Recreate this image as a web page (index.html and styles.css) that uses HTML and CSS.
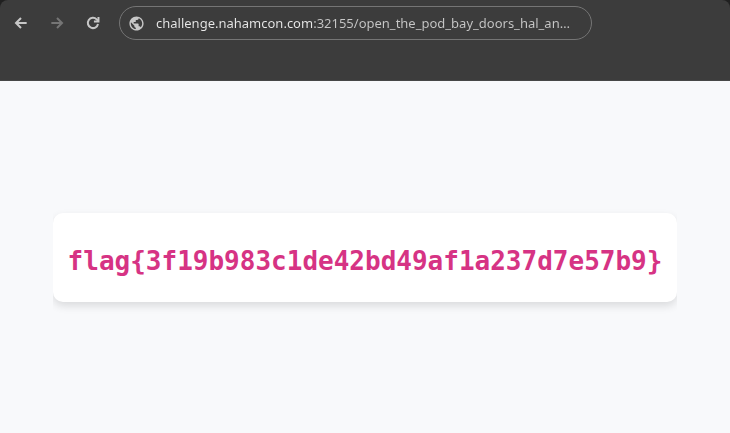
FILE: index.html
```html
<!DOCTYPE html>
<html lang="en">
<head>
<meta charset="utf-8">
<title>Flag</title>
<link rel="stylesheet" href="styles.css">
</head>
<body>
<header class="chrome">
  <nav class="toolbar" aria-label="Browser toolbar">
    <button class="tool" type="button" aria-label="Back">
      <svg viewBox="0 0 24 24"><path d="M20.500 12H5M12 4.500 4.500 12l7.500 7.500"/></svg>
    </button>
    <button class="tool" type="button" aria-label="Forward" disabled>
      <svg viewBox="0 0 24 24"><path d="M3.500 12H19M12 4.500l7.500 7.500-7.500 7.500"/></svg>
    </button>
    <button class="tool" type="button" aria-label="Reload">
      <svg viewBox="0 0 24 24"><path d="M19.500 13.500A7.700 7.700 0 1 1 17.500 6.600L20 9"/><path d="M20.200 3v6.800h-6.800"/></svg>
    </button>
    <label class="address">
      <svg class="globe" viewBox="0 0 24 24" aria-hidden="true"><path d="M12 2C6.480 2 2 6.480 2 12s4.480 10 10 10 10-4.480 10-10S17.520 2 12 2zm-1 17.930c-3.950-.49-7-3.850-7-7.930 0-.62.08-1.210.21-1.790L9 15v1c0 1.100.9 2 2 2v1.930zm6.900-2.540c-.26-.81-1-1.390-1.900-1.390h-1v-3c0-.55-.45-1-1-1H8v-2h2c.55 0 1-.45 1-1V7h2c1.100 0 2-.9 2-2v-.41c2.930 1.190 5 4.060 5 7.410 0 2.080-.8 3.970-2.100 5.390z"/></svg>
      <input class="url" type="text" aria-label="Address" spellcheck="false" value="challenge.nahamcon.com:32155/open_the_pod_bay_doors_hal_an…">
    </label>
  </nav>
</header>
<main class="page">
  <div class="clip">
    <div class="card"><code class="flag">flag{3f19b983c1de42bd49af1a237d7e57b9}</code></div>
  </div>
</main>
</body>
</html>
```
FILE: styles.css
```css
* {
  box-sizing: border-box;
}

body {
  display: flex;
  flex-direction: column;
  min-height: 100vh;
  margin: 0;
  background: #202020;
  font-family: "Noto Sans", "Open Sans", sans-serif;
}

.chrome {
  height: 81px;
  padding: 6px 7px;
  background: #3c3c3c;
  border-bottom: 1px solid #474747;
  border-radius: 8px 8px 0 0;
}

.toolbar {
  display: flex;
  align-items: center;
  gap: 8px;
}

.tool {
  display: flex;
  align-items: center;
  justify-content: center;
  width: 28px;
  height: 28px;
  padding: 0;
  border: 0;
  border-radius: 50%;
  background: transparent;
  color: #c7c7c7;
}

.tool:disabled {
  color: #757575;
}

.tool svg {
  width: 16px;
  height: 16px;
  fill: none;
  stroke: currentColor;
  stroke-width: 3;
}

.address {
  display: flex;
  align-items: center;
  gap: 11px;
  flex: 0 1 473px;
  height: 34px;
  margin-left: 4px;
  padding: 0 16px 0 8px;
  border: 1px solid #757575;
  border-radius: 17px;
}

.globe {
  flex: none;
  width: 17px;
  height: 17px;
  fill: #c7c7c7;
}

.url {
  flex: 1;
  min-width: 0;
  padding: 0;
  border: 0;
  outline: 0;
  background: linear-gradient(90deg, #e9e9e9 156px, #c7c7c7 156px);
  background-clip: text;
  color: transparent;
  font: 13px/20px "Noto Sans", "Open Sans", sans-serif;
}

.page {
  display: flex;
  flex: 1;
  align-items: center;
  justify-content: center;
  background: #f8f9fb;
}

.clip {
  padding: 12px 0;
  overflow: hidden;
}

.card {
  padding: 32px 15px 24px;
  border-radius: 10px;
  background: #fff;
  box-shadow: 0 4px 8px rgb(0 0 0 / 12%);
}

.flag {
  display: block;
  color: #d63384;
  font: bold 26px/33px "DejaVu Sans Mono", monospace;
}
```
